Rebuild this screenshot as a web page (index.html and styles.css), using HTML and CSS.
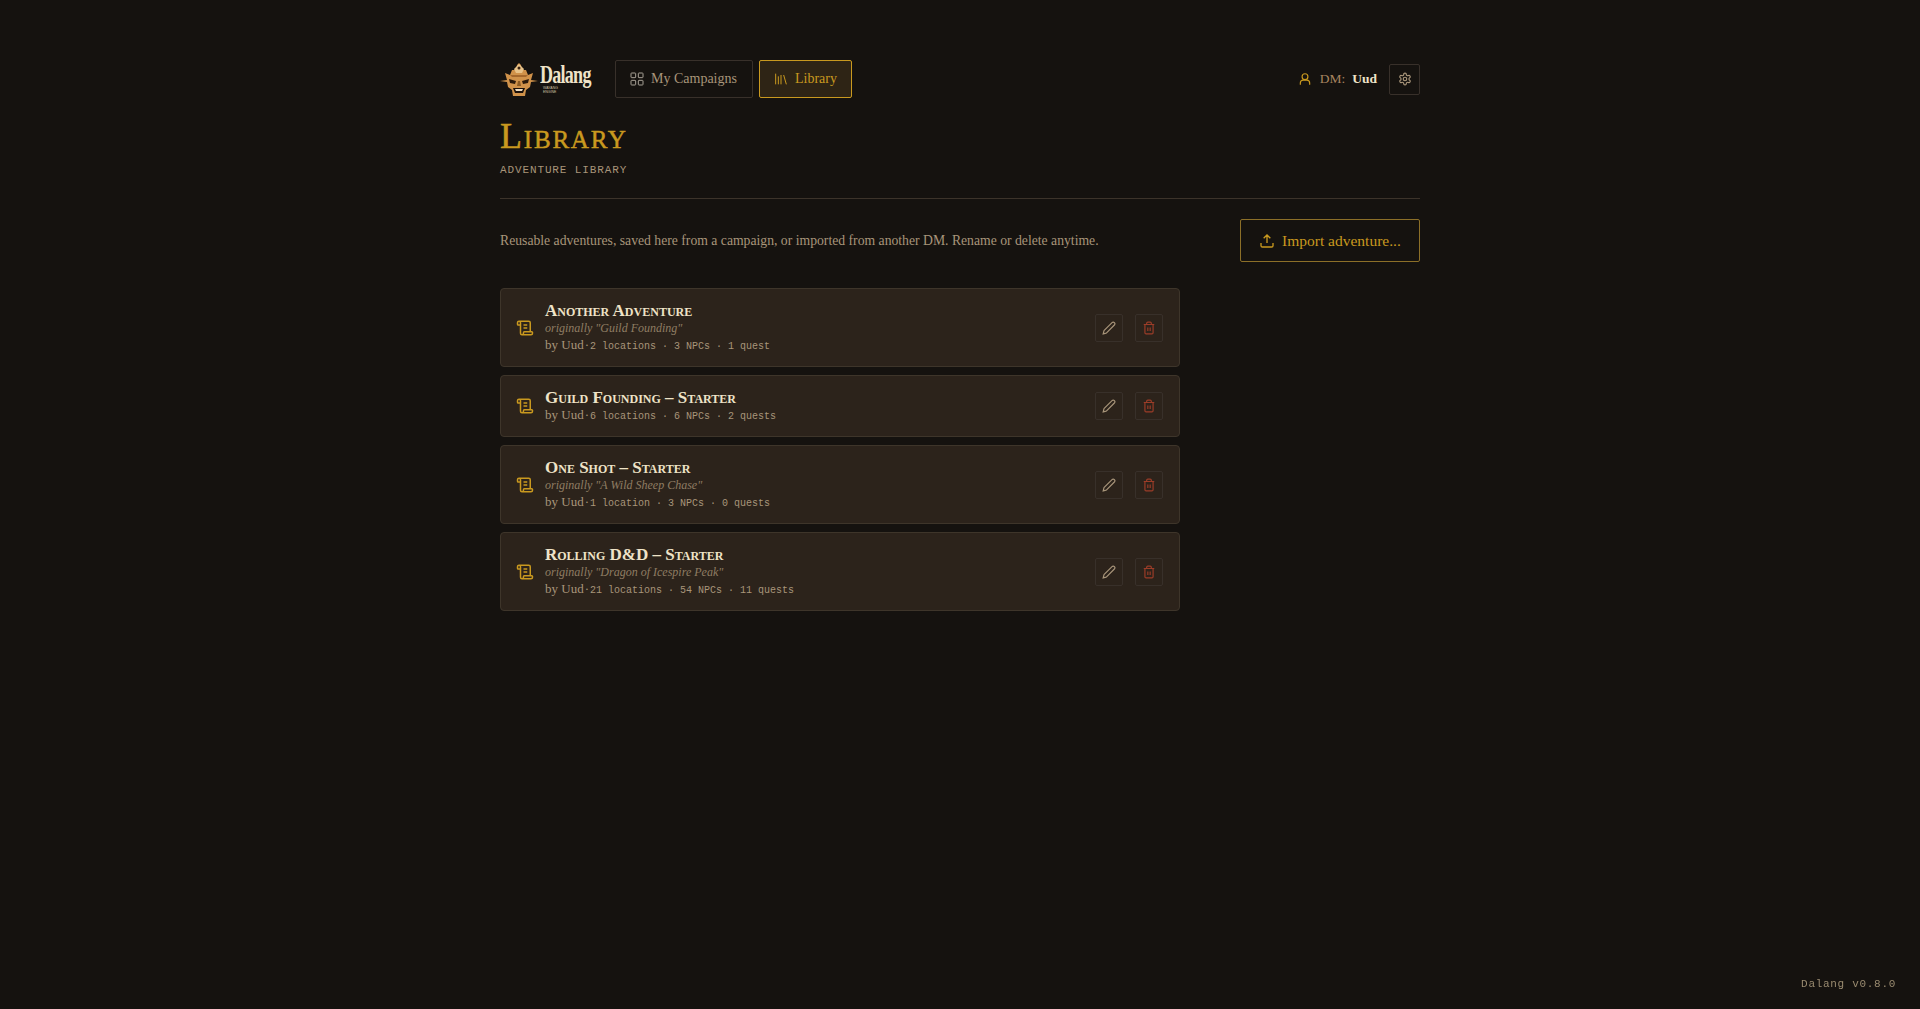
FILE: index.html
```html
<!DOCTYPE html>
<html lang="en">
<head>
    <meta charset="UTF-8">
    <title>Dalang - Library</title>
    <link rel="stylesheet" href="styles.css">
</head>
<body>
    <div class="container">
        <header class="topbar">
            <div class="logo">
                <svg class="logo-mask" width="38" height="35" viewBox="0 0 38 35">
                    <path d="M0 19l7-1-2-7 5 2 2-5 4 0 1-5 2-2 2 2 1 5 4 0 2 5 5-2-2 7 7 1-7 1-1 5-4 3-1 6h-12l-1-6-4-3-1-5z" fill="#d0924a"/>
                    <path d="M14 7l5-5 5 5-2 4h-6z" fill="#e8c288"/>
                    <circle cx="19" cy="6" r="1.500" fill="#3a2210"/>
                    <path d="M10 13h18l-2 2h-14z" fill="#a5682c"/>
                    <path d="M9 17l7 2-1 3-5-1zM29 17l-7 2 1 3 5-1z" fill="#2b1a0c"/>
                    <path d="M13 26h12l-2 5h-8z" fill="#1a100a"/>
                    <path d="M15 27h8l-1 2h-6z" fill="#eedcc0"/>
                    <path d="M18 19h2l1 5h-4z" fill="#8a5a24"/>
                </svg>
                <div class="logo-word">
                    <span class="logo-name">Dalang</span>
                    <span class="logo-tag">WAYANG<br>ENGINE</span>
                </div>
            </div>
            <nav class="nav">
                <a class="nav-btn">
                    <svg width="16" height="16" viewBox="0 0 24 24" fill="none" stroke="currentColor" stroke-width="2"><rect x="3" y="3" width="7" height="7" rx="1"/><rect x="14" y="3" width="7" height="7" rx="1"/><rect x="14" y="14" width="7" height="7" rx="1"/><rect x="3" y="14" width="7" height="7" rx="1"/></svg>
                    My Campaigns
                </a>
                <a class="nav-btn active">
                    <svg width="16" height="16" viewBox="0 0 24 24" fill="none" stroke="currentColor" stroke-width="2"><path d="M16 6l4 14M12 6v14M8 8v12M4 4v16"/></svg>
                    Library
                </a>
            </nav>
            <div class="user">
                <svg class="user-icon" width="14" height="14" viewBox="0 0 24 24" fill="none" stroke="currentColor" stroke-width="2"><circle cx="12" cy="8" r="5"/><path d="M4 22v-3a5 5 0 0 1 5-5h6a5 5 0 0 1 5 5v3"/></svg>
                <span class="user-label">DM:</span>
                <span class="user-name">Uud</span>
                <button class="settings-btn">
                    <svg width="14" height="14" viewBox="0 0 24 24" fill="none" stroke="currentColor" stroke-width="2"><path d="M12.220 2h-.44a2 2 0 0 0-2 2v.18a2 2 0 0 1-1 1.730l-.43.25a2 2 0 0 1-2 0l-.15-.08a2 2 0 0 0-2.730.73l-.22.38a2 2 0 0 0 .73 2.730l.15.1a2 2 0 0 1 1 1.720v.51a2 2 0 0 1-1 1.740l-.15.09a2 2 0 0 0-.73 2.730l.22.38a2 2 0 0 0 2.730.73l.15-.08a2 2 0 0 1 2 0l.43.25a2 2 0 0 1 1 1.730V20a2 2 0 0 0 2 2h.44a2 2 0 0 0 2-2v-.18a2 2 0 0 1 1-1.730l.43-.25a2 2 0 0 1 2 0l.15.08a2 2 0 0 0 2.730-.73l.22-.39a2 2 0 0 0-.73-2.730l-.15-.08a2 2 0 0 1-1-1.740v-.5a2 2 0 0 1 1-1.740l.15-.09a2 2 0 0 0 .73-2.730l-.22-.38a2 2 0 0 0-2.730-.73l-.15.08a2 2 0 0 1-2 0l-.43-.25a2 2 0 0 1-1-1.730V4a2 2 0 0 0-2-2z"/><circle cx="12" cy="12" r="3"/></svg>
                </button>
            </div>
        </header>

        <div class="page-head">
            <h1>Library</h1>
            <p class="subtitle">ADVENTURE LIBRARY</p>
        </div>

        <div class="intro">
            <p>Reusable adventures, saved here from a campaign, or imported from another DM. Rename or delete anytime.</p>
            <button class="import-btn">
                <svg width="16" height="16" viewBox="0 0 24 24" fill="none" stroke="currentColor" stroke-width="2"><path d="M12 15V3M7 8l5-5 5 5M3 15v4a2 2 0 0 0 2 2h14a2 2 0 0 0 2-2v-4"/></svg>
                Import adventure...
            </button>
        </div>

        <div class="list">
            <div class="card">
                <svg class="scroll" width="18" height="18" viewBox="0 0 24 24" fill="none" stroke="currentColor" stroke-width="2"><path d="M15 12h-5M15 8h-5M19 17V5a2 2 0 0 0-2-2H4M8 21h12a2 2 0 0 0 2-2v-1a1 1 0 0 0-1-1H11a1 1 0 0 0-1 1v1a2 2 0 1 1-4 0V5a2 2 0 1 0-4 0v2a1 1 0 0 0 1 1h3"/></svg>
                <div class="card-body">
                    <div class="card-title">Another Adventure</div>
                    <div class="card-orig">originally "Guild Founding"</div>
                    <div class="card-meta">by Uud<span class="dot">·</span><span class="mono">2 locations · 3 NPCs · 1 quest</span></div>
                </div>
                <div class="card-actions">
                    <button class="icon-btn"><svg width="14" height="14" viewBox="0 0 24 24" fill="none" stroke="currentColor" stroke-width="2"><path d="M21.200 6.800a2.800 2.800 0 0 0-4-4L3.800 16.200a2 2 0 0 0-.5.800L2 22l5-1.300a2 2 0 0 0 .8-.5z"/></svg></button>
                    <button class="icon-btn danger"><svg width="14" height="14" viewBox="0 0 24 24" fill="none" stroke="currentColor" stroke-width="2"><path d="M3 6h18M19 6v14a2 2 0 0 1-2 2H7a2 2 0 0 1-2-2V6M8 6V4a2 2 0 0 1 2-2h4a2 2 0 0 1 2 2v2M10 11v6M14 11v6"/></svg></button>
                </div>
            </div>
            <div class="card">
                <svg class="scroll" width="18" height="18" viewBox="0 0 24 24" fill="none" stroke="currentColor" stroke-width="2"><path d="M15 12h-5M15 8h-5M19 17V5a2 2 0 0 0-2-2H4M8 21h12a2 2 0 0 0 2-2v-1a1 1 0 0 0-1-1H11a1 1 0 0 0-1 1v1a2 2 0 1 1-4 0V5a2 2 0 1 0-4 0v2a1 1 0 0 0 1 1h3"/></svg>
                <div class="card-body">
                    <div class="card-title">Guild Founding – Starter</div>
                    <div class="card-meta">by Uud<span class="dot">·</span><span class="mono">6 locations · 6 NPCs · 2 quests</span></div>
                </div>
                <div class="card-actions">
                    <button class="icon-btn"><svg width="14" height="14" viewBox="0 0 24 24" fill="none" stroke="currentColor" stroke-width="2"><path d="M21.200 6.800a2.800 2.800 0 0 0-4-4L3.800 16.200a2 2 0 0 0-.5.800L2 22l5-1.300a2 2 0 0 0 .8-.5z"/></svg></button>
                    <button class="icon-btn danger"><svg width="14" height="14" viewBox="0 0 24 24" fill="none" stroke="currentColor" stroke-width="2"><path d="M3 6h18M19 6v14a2 2 0 0 1-2 2H7a2 2 0 0 1-2-2V6M8 6V4a2 2 0 0 1 2-2h4a2 2 0 0 1 2 2v2M10 11v6M14 11v6"/></svg></button>
                </div>
            </div>
            <div class="card">
                <svg class="scroll" width="18" height="18" viewBox="0 0 24 24" fill="none" stroke="currentColor" stroke-width="2"><path d="M15 12h-5M15 8h-5M19 17V5a2 2 0 0 0-2-2H4M8 21h12a2 2 0 0 0 2-2v-1a1 1 0 0 0-1-1H11a1 1 0 0 0-1 1v1a2 2 0 1 1-4 0V5a2 2 0 1 0-4 0v2a1 1 0 0 0 1 1h3"/></svg>
                <div class="card-body">
                    <div class="card-title">One Shot – Starter</div>
                    <div class="card-orig">originally "A Wild Sheep Chase"</div>
                    <div class="card-meta">by Uud<span class="dot">·</span><span class="mono">1 location · 3 NPCs · 0 quests</span></div>
                </div>
                <div class="card-actions">
                    <button class="icon-btn"><svg width="14" height="14" viewBox="0 0 24 24" fill="none" stroke="currentColor" stroke-width="2"><path d="M21.200 6.800a2.800 2.800 0 0 0-4-4L3.800 16.200a2 2 0 0 0-.5.800L2 22l5-1.300a2 2 0 0 0 .8-.5z"/></svg></button>
                    <button class="icon-btn danger"><svg width="14" height="14" viewBox="0 0 24 24" fill="none" stroke="currentColor" stroke-width="2"><path d="M3 6h18M19 6v14a2 2 0 0 1-2 2H7a2 2 0 0 1-2-2V6M8 6V4a2 2 0 0 1 2-2h4a2 2 0 0 1 2 2v2M10 11v6M14 11v6"/></svg></button>
                </div>
            </div>
            <div class="card">
                <svg class="scroll" width="18" height="18" viewBox="0 0 24 24" fill="none" stroke="currentColor" stroke-width="2"><path d="M15 12h-5M15 8h-5M19 17V5a2 2 0 0 0-2-2H4M8 21h12a2 2 0 0 0 2-2v-1a1 1 0 0 0-1-1H11a1 1 0 0 0-1 1v1a2 2 0 1 1-4 0V5a2 2 0 1 0-4 0v2a1 1 0 0 0 1 1h3"/></svg>
                <div class="card-body">
                    <div class="card-title">Rolling D&amp;D – Starter</div>
                    <div class="card-orig">originally "Dragon of Icespire Peak"</div>
                    <div class="card-meta">by Uud<span class="dot">·</span><span class="mono">21 locations · 54 NPCs · 11 quests</span></div>
                </div>
                <div class="card-actions">
                    <button class="icon-btn"><svg width="14" height="14" viewBox="0 0 24 24" fill="none" stroke="currentColor" stroke-width="2"><path d="M21.200 6.800a2.800 2.800 0 0 0-4-4L3.800 16.200a2 2 0 0 0-.5.800L2 22l5-1.300a2 2 0 0 0 .8-.5z"/></svg></button>
                    <button class="icon-btn danger"><svg width="14" height="14" viewBox="0 0 24 24" fill="none" stroke="currentColor" stroke-width="2"><path d="M3 6h18M19 6v14a2 2 0 0 1-2 2H7a2 2 0 0 1-2-2V6M8 6V4a2 2 0 0 1 2-2h4a2 2 0 0 1 2 2v2M10 11v6M14 11v6"/></svg></button>
                </div>
            </div>
        </div>
    </div>
    <div class="version">Dalang v0.8.0</div>
</body>
</html>
```

FILE: styles.css
```css
html, body {
    height: 100%;
}

body {
    margin: 0;
    background-color: #15120f;
    color: #b09a78;
    font-family: "Liberation Serif", serif;
    font-size: 14px;
    overflow: hidden;
}

.container {
    width: 920px;
    margin: 0 auto;
    padding-top: 60px;
}

.topbar {
    display: flex;
    align-items: center;
    height: 38px;
}

.logo {
    display: flex;
    align-items: center;
    gap: 2px;
    width: 115px;
    flex-shrink: 0;
}

.logo-word {
    width: 50px;
}

.logo-name {
    display: block;
    font-size: 25px;
    font-weight: bold;
    line-height: 22px;
    letter-spacing: -1px;
    color: #efe3c8;
    transform: scaleX(0.72);
    transform-origin: left;
}

.logo-tag {
    display: block;
    margin-left: 3px;
    font-family: "Liberation Sans", sans-serif;
    font-size: 3.500px;
    line-height: 4px;
    color: #cfc2a5;
}

.nav {
    display: flex;
    gap: 6px;
}

.nav-btn {
    display: flex;
    align-items: center;
    gap: 6px;
    box-sizing: border-box;
    height: 38px;
    padding: 0 15px 0 13px;
    border: 1px solid #38302a;
    border-radius: 2px;
    color: #a8957a;
}

.nav-btn svg {
    color: #a8a196;
    stroke-width: 1.500;
}

.nav-btn.active {
    padding-right: 14px;
    border-color: #c9991f;
    background-color: #2e2415;
    color: #c9991f;
}

.nav-btn.active svg {
    color: #c9991f;
}

.user {
    display: flex;
    align-items: center;
    margin-left: auto;
    font-size: 13.500px;
}

.user-icon {
    color: #c9991f;
    margin-right: 8px;
}

.user-label {
    color: #a8845f;
}

.user-name {
    margin-left: 7px;
    color: #efe3c8;
    font-weight: bold;
}

.settings-btn,
.icon-btn {
    display: flex;
    align-items: center;
    justify-content: center;
    padding: 0;
    background: transparent;
    border: 1px solid #38302a;
    border-radius: 2px;
    color: #a8957a;
}

.settings-btn {
    width: 31px;
    height: 31px;
    margin-left: 12px;
}

.page-head {
    margin-top: 19px;
    padding-bottom: 20px;
    border-bottom: 1px solid #3c332a;
}

h1 {
    margin: 0;
    font-size: 36px;
    font-weight: normal;
    font-variant: small-caps;
    line-height: 38px;
    letter-spacing: 1.800px;
    color: #c9991f;
    -webkit-text-stroke: 0.500px #c9991f;
}

.subtitle {
    margin: 7px 0 0;
    font-family: "Liberation Mono", monospace;
    font-size: 11px;
    line-height: 16px;
    letter-spacing: 0.880px;
    color: #a8957a;
}

.intro {
    display: flex;
    align-items: center;
    justify-content: space-between;
    margin-top: 20px;
}

.intro p {
    margin: 0;
    font-size: 13.700px;
    color: #a8957a;
}

.import-btn {
    display: flex;
    align-items: center;
    gap: 7px;
    box-sizing: border-box;
    width: 180px;
    height: 43px;
    padding: 0 18px;
    background: transparent;
    border: 1px solid #8c6f28;
    border-radius: 2px;
    color: #c9991f;
    font-family: "Liberation Serif", serif;
    font-size: 15.500px;
    white-space: nowrap;
}

.import-btn svg {
    flex-shrink: 0;
}

.list {
    display: flex;
    flex-direction: column;
    gap: 8px;
    width: 680px;
    margin-top: 26px;
}

.card {
    display: flex;
    align-items: center;
    padding: 12px 16px 12px 15px;
    background-color: #2c231b;
    border: 1px solid #3e352a;
    border-radius: 4px;
}

.scroll {
    flex-shrink: 0;
    color: #c9991f;
    margin-right: 11px;
}

.card-body {
    flex: 1;
}

.card-title {
    font-size: 17px;
    font-weight: bold;
    font-variant: small-caps;
    line-height: 19px;
    color: #efe3c8;
}

.card-orig {
    font-size: 12px;
    font-style: italic;
    line-height: 17px;
    color: #8f7d63;
}

.card-meta {
    display: flex;
    align-items: baseline;
    height: 17px;
    font-size: 13px;
    line-height: 15px;
    color: #a8957a;
}

.dot {
    margin: 0 1px;
}

.mono {
    font-family: "Liberation Mono", monospace;
    font-size: 10px;
    white-space: pre;
}

.card-actions {
    display: flex;
    gap: 12px;
}

.icon-btn {
    width: 28px;
    height: 28px;
}

.icon-btn.danger {
    color: #9c3d28;
}

.version {
    position: fixed;
    right: 24px;
    bottom: 19px;
    font-family: "Liberation Mono", monospace;
    font-size: 11px;
    letter-spacing: 0.700px;
    color: #9a8b70;
}
```
